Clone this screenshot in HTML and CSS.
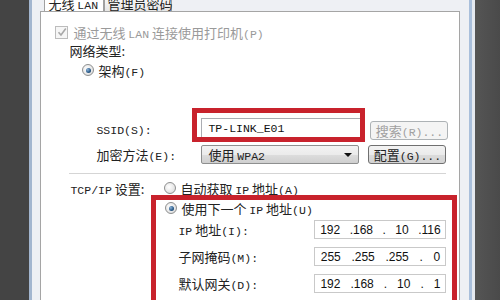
FILE: index.html
```html
<!DOCTYPE html>
<html lang="zh-CN">
<head>
    <meta charset="UTF-8">
    <title>无线 LAN 设置</title>
    <link rel="stylesheet" href="styles.css">
</head>
<body>
    <div class="screen">
        <div class="side side-left"></div>
        <div class="window">
            <div class="tabs">
                <div class="tab tab-active">无线 <span class="en">LAN</span></div>
                <div class="tab">管理员密码</div>
            </div>
            <div class="panel">
                <div class="row check-row disabled">
                    <span class="checkbox">
                        <svg width="10" height="10" viewBox="0 0 10 10"><path d="M1.5 5.2 L4 8 L8.8 1.5" fill="none" stroke="#a8a8a8" stroke-width="1.6"/></svg>
                    </span>
                    <span>通过无线 <span class="en">LAN</span> 连接使用打印机<span class="en">(P)</span></span>
                </div>
                <div class="row type-label">网络类型:</div>
                <div class="row radio-row">
                    <span class="radio radio-on"></span>
                    <span>架构<span class="en">(F)</span></span>
                </div>

                <div class="row field-row ssid-row">
                    <span class="label"><span class="en">SSID(S):</span></span>
                    <span class="input"><span class="en">TP-LINK_E01</span></span>
                    <span class="button button-off"><span>搜索<span class="en">(R)...</span></span></span>
                </div>
                <div class="row field-row enc-row">
                    <span class="label">加密方法<span class="en">(E):</span></span>
                    <span class="select"><span>使用 <span class="en">WPA2</span></span><span class="arrow"></span></span>
                    <span class="button"><span>配置<span class="en">(G)...</span></span></span>
                </div>

                <div class="separator"></div>

                <div class="row tcp-row">
                    <span class="tcp-label"><span class="en">TCP/IP</span> 设置:</span>
                    <span class="radio"></span>
                    <span>自动获取 <span class="en">IP</span> 地址<span class="en">(A)</span></span>
                </div>
                <div class="row manual-row">
                    <span class="radio radio-on"></span>
                    <span>使用下一个 <span class="en">IP</span> 地址<span class="en">(U)</span></span>
                </div>

                <div class="row ip-row">
                    <span class="ip-label"><span class="en">IP</span> 地址<span class="en">(I):</span></span>
                    <span class="ip-field"><span>192</span><span>.168</span><span>.</span><span>10</span><span>.116</span></span>
                </div>
                <div class="row ip-row">
                    <span class="ip-label">子网掩码<span class="en">(M):</span></span>
                    <span class="ip-field"><span>255</span><span>.255</span><span>.255</span><span>.</span><span>0</span></span>
                </div>
                <div class="row ip-row">
                    <span class="ip-label">默认网关<span class="en">(D):</span></span>
                    <span class="ip-field"><span>192</span><span>.168</span><span>.</span><span>10</span><span>.</span><span>1</span></span>
                </div>

                <div class="mark mark-ssid"></div>
                <div class="mark mark-ip"></div>
            </div>
        </div>
        <div class="side side-right"></div>
    </div>
</body>
</html>
```
FILE: styles.css
```css
body {
    margin: 0;
    padding: 0;
    background: #454545;
    font-family: "Noto Sans CJK SC", sans-serif;
    font-size: 13px;
    color: #222;
}
.screen {
    display: flex;
    width: 500px;
    height: 300px;
    overflow: hidden;
}
.side {
    background: #444;
}
.side-left {
    width: 30px;
}
.side-right {
    width: 25px;
    border-left: 3px solid #e4e9f0;
    background: linear-gradient(90deg, #555 0%, #4a4a4a 100%);
}
.window {
    width: 428px;
    border-left: 3px solid #a3b6cf;
    border-right: 3px solid #a9bfdb;
    padding: 0 9px 0 8px;
    background: #eef0f4;
    display: flex;
    flex-direction: column;
}
.en {
    font-family: "Liberation Mono", monospace;
    font-size: 11.5px;
}

/* tabs */
.tabs {
    height: 11px;
    display: flex;
    padding-left: 4px;
    overflow: hidden;
}
.tab {
    height: 14px;
    margin-top: -4px;
    line-height: 14px;
    padding: 0 3px;
    border: 1px solid #a0a0a0;
    background: #f0f0f0;
    font-size: 13px;
    white-space: nowrap;
}
.tab-active {
    width: 52px;
    background: #fff;
    border-bottom: none;
}
.tab + .tab {
    width: 64px;
    padding: 0 0 0 2px;
    background: linear-gradient(#fafafa, #e6e6e6);
}

/* panel */
.panel {
    position: relative;
    flex: 1;
    border: 1px solid #a5a5a5;
    border-bottom: none;
    background: #fff;
    padding-top: 12px;
    overflow: hidden;
}
.row {
    display: flex;
    align-items: center;
    height: 16px;
    white-space: nowrap;
}
.check-row {
    margin-left: 14px;
    gap: 5px;
}
.disabled {
    color: #9a9a9a;
}
.checkbox {
    width: 11px;
    height: 11px;
    border: 1px solid #bcbcbc;
    background: #f6f6f6;
    display: flex;
    align-items: center;
    justify-content: center;
}
.type-label {
    margin: 2px 0 0 28px;
}
.radio-row {
    margin: 4px 0 0 41px;
}
.radio {
    width: 10px;
    height: 10px;
    border: 1px solid #8e8f8f;
    border-radius: 50%;
    background: radial-gradient(circle at 40% 40%, #fff 0%, #e2e2e2 70%, #cfcfcf 100%);
    display: inline-flex;
    align-items: center;
    justify-content: center;
    margin-right: 4px;
}
.radio-on::after {
    content: "";
    width: 5px;
    height: 5px;
    border-radius: 50%;
    background: radial-gradient(circle at 35% 35%, #8fb4d8 0%, #2d5f8e 55%, #19324d 100%);
}

/* ssid and encryption */
.field-row {
    margin-left: 55px;
}
.label {
    width: 105px;
}
.ssid-row {
    margin-top: 40px;
    height: 21px;
}
.input {
    width: 152px;
    height: 19px;
    border: 1px solid #abadb3;
    padding-left: 6px;
    display: flex;
    align-items: center;
    color: #111;
}
.button {
    width: 76px;
    height: 17px;
    margin-left: 9px;
    border: 1px solid #707070;
    border-radius: 3px;
    background: linear-gradient(#f3f3f3 0%, #ebebeb 50%, #dcdcdc 51%, #d3d3d3 100%);
    display: flex;
    align-items: center;
    justify-content: center;
}
.button-off {
    border-color: #adb2b5;
    background: #f4f4f4;
    color: #a0a0a0;
    margin-top: 4px;
}
.enc-row {
    margin-top: 6px;
    height: 19px;
}
.select {
    position: relative;
    width: 150px;
    height: 17px;
    border: 1px solid #8e8f8f;
    border-radius: 2px;
    padding-left: 6px;
    background: linear-gradient(#f2f2f2 0%, #ebebeb 50%, #dddddd 51%, #cfcfcf 100%);
    display: flex;
    align-items: center;
}
.arrow {
    position: absolute;
    right: 6px;
    top: 7px;
    border-left: 4px solid transparent;
    border-right: 4px solid transparent;
    border-top: 4px solid #111;
}
.separator {
    margin: 9px 0 0 28px;
    width: 377px;
    height: 1px;
    background: #d5d5d5;
}

/* tcp/ip */
.tcp-row {
    margin: 6px 0 0 29px;
}
.tcp-label {
    width: 94px;
}
.manual-row {
    margin: 4px 0 0 124px;
}
.ip-row {
    margin: 4px 0 0 137px;
    height: 19px;
}
.ip-row + .ip-row {
    margin-top: 8px;
}
.ip-label {
    width: 136px;
}
.ip-field {
    width: 130px;
    height: 17px;
    border: 1px solid #c9c9c9;
    display: flex;
    align-items: center;
    justify-content: space-around;
    font-family: "Liberation Sans", sans-serif;
    font-size: 12px;
    color: #111;
}

/* annotation boxes drawn over the dialog */
.mark {
    position: absolute;
    border: 5px solid #c8222c;
}
.mark-ssid {
    left: 151px;
    top: 96px;
    width: 163px;
    height: 24px;
}
.mark-ip {
    left: 110px;
    top: 183px;
    width: 296px;
    height: 140px;
}
```
